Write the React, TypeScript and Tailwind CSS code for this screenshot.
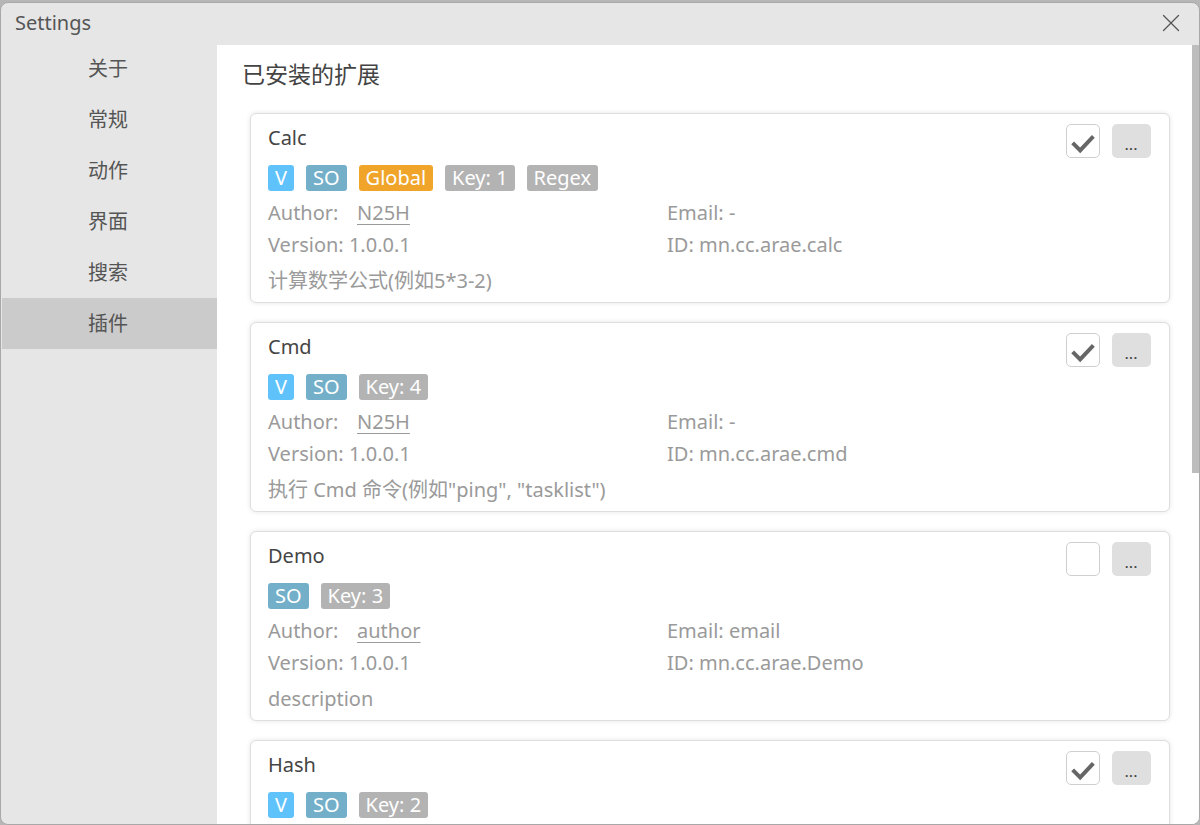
import React from 'react';
import { X } from 'lucide-react';

type Tag = { label: string; color: string };

type Plugin = {
  name: string;
  tags: Tag[];
  author: string;
  email: string;
  version: string;
  id: string;
  description: string;
  enabled: boolean;
};

const tagColors = {
  v: 'bg-[#60c2fb]',
  so: 'bg-[#74afc9]',
  global: 'bg-[#f0a52a]',
  gray: 'bg-[#b3b3b3]',
};

const plugins: Plugin[] = [
  {
    name: 'Calc',
    tags: [
      { label: 'V', color: tagColors.v },
      { label: 'SO', color: tagColors.so },
      { label: 'Global', color: tagColors.global },
      { label: 'Key: 1', color: tagColors.gray },
      { label: 'Regex', color: tagColors.gray },
    ],
    author: 'N25H',
    email: '-',
    version: '1.0.0.1',
    id: 'mn.cc.arae.calc',
    description: '计算数学公式(例如5*3-2)',
    enabled: true,
  },
  {
    name: 'Cmd',
    tags: [
      { label: 'V', color: tagColors.v },
      { label: 'SO', color: tagColors.so },
      { label: 'Key: 4', color: tagColors.gray },
    ],
    author: 'N25H',
    email: '-',
    version: '1.0.0.1',
    id: 'mn.cc.arae.cmd',
    description: '执行 Cmd 命令(例如"ping", "tasklist")',
    enabled: true,
  },
  {
    name: 'Demo',
    tags: [
      { label: 'SO', color: tagColors.so },
      { label: 'Key: 3', color: tagColors.gray },
    ],
    author: 'author',
    email: 'email',
    version: '1.0.0.1',
    id: 'mn.cc.arae.Demo',
    description: 'description',
    enabled: false,
  },
  {
    name: 'Hash',
    tags: [
      { label: 'V', color: tagColors.v },
      { label: 'SO', color: tagColors.so },
      { label: 'Key: 2', color: tagColors.gray },
    ],
    author: 'N25H',
    email: '-',
    version: '1.0.0.1',
    id: 'mn.cc.arae.hash',
    description: '计算文本哈希值',
    enabled: true,
  },
];

const navItems = ['关于', '常规', '动作', '界面', '搜索', '插件'];

const font = { fontFamily: '"Noto Sans", "Noto Sans CJK SC", sans-serif' };

const Checkbox: React.FC<{ checked: boolean }> = ({ checked }) => (
  <div className="w-[34px] h-[34px] rounded-[5px] border border-[#cfcfcf] bg-white flex items-center justify-center">
    {checked && (
      <svg width="34" height="34" viewBox="0 0 34 34">
        <polyline points="6,19 14,27 28,12" fill="none" stroke="#666" strokeWidth="4.2" />
      </svg>
    )}
  </div>
);

const PluginCard: React.FC<{ plugin: Plugin }> = ({ plugin }) => (
  <div className="flex-none bg-white border border-[#dedede] rounded-[6px] shadow-[0_0_5px_rgba(0,0,0,0.10)] pl-[17px] pr-[18px] pt-[10px] pb-[5px] flex">
    <div className="flex-1 min-w-0">
      <div className="h-[28px] leading-[28px] text-[20px] text-[#454545]">{plugin.name}</div>
      <div className="mt-[13px] flex gap-[12px]">
        {plugin.tags.map(t => (
          <span key={t.label} className={`h-[26px] leading-[26px] px-[7px] rounded-[3px] text-white text-[20px] ${t.color}`}>
            {t.label}
          </span>
        ))}
      </div>
      <div className="mt-[6px] text-[20px] text-[#9a9a9a]">
        <div className="flex h-[32px] leading-[32px]">
          <div className="w-[399px] flex">
            <span className="w-[89px]">Author:</span>
            <span className="underline underline-offset-[4px] decoration-[1px]">{plugin.author}</span>
          </div>
          <span>Email: {plugin.email}</span>
        </div>
        <div className="flex h-[32px] leading-[32px]">
          <span className="w-[399px]">Version: {plugin.version}</span>
          <span>ID: {plugin.id}</span>
        </div>
      </div>
      <div className="mt-[4px] h-[32px] leading-[32px] text-[20px] text-[#9a9a9a]">{plugin.description}</div>
    </div>
    <div className="flex gap-[12px] self-start">
      <Checkbox checked={plugin.enabled} />
      <button className="w-[39px] h-[34px] rounded-[5px] bg-[#dfdfdf] text-[#444] text-[12px] font-bold leading-none pt-[10px] tracking-[1px]">
        ...
      </button>
    </div>
  </div>
);

const App: React.FC = () => {
  return (
    <div className="w-[1200px] h-[825px] bg-[#b6b6b6] pt-[2px] overflow-hidden" style={font}>
      <div className="h-[823px] rounded-[8px] border border-[#a8a8a8] bg-[#e6e6e6] overflow-hidden flex flex-col">
        <div className="h-[40px] flex-none flex items-center justify-between pl-[14px] pr-[13px]">
          <span className="text-[20px] text-[#555]">Settings</span>
          <X size={30} strokeWidth={1} className="text-[#555]" />
        </div>
        <div className="flex-1 flex min-h-0">
          <div className="w-[216px] flex-none pl-[1px]">
            {navItems.map(item => (
              <div
                key={item}
                className={`h-[51px] leading-[51px] pl-[86px] text-[20px] text-[#555] ${item === '插件' ? 'bg-[#cbcbcb]' : ''}`}
              >
                {item}
              </div>
            ))}
          </div>
          <div className="flex-1 mt-[2px] bg-white flex min-w-0">
            <div className="flex-1 min-w-0 pl-[25px] pr-[22px] flex flex-col overflow-hidden">
              <div className="h-[58px] leading-[58px] text-[23px] text-[#444] flex-none">已安装的扩展</div>
              <div className="pl-[8px] flex flex-col gap-[19px] pt-[10px]">
                {plugins.map(p => (
                  <PluginCard key={p.name} plugin={p} />
                ))}
              </div>
            </div>
            <div className="w-[7px] flex-none">
              <div className="h-[428px] bg-[#bdbdbd]" />
            </div>
          </div>
        </div>
      </div>
    </div>
  );
};

export default App;
